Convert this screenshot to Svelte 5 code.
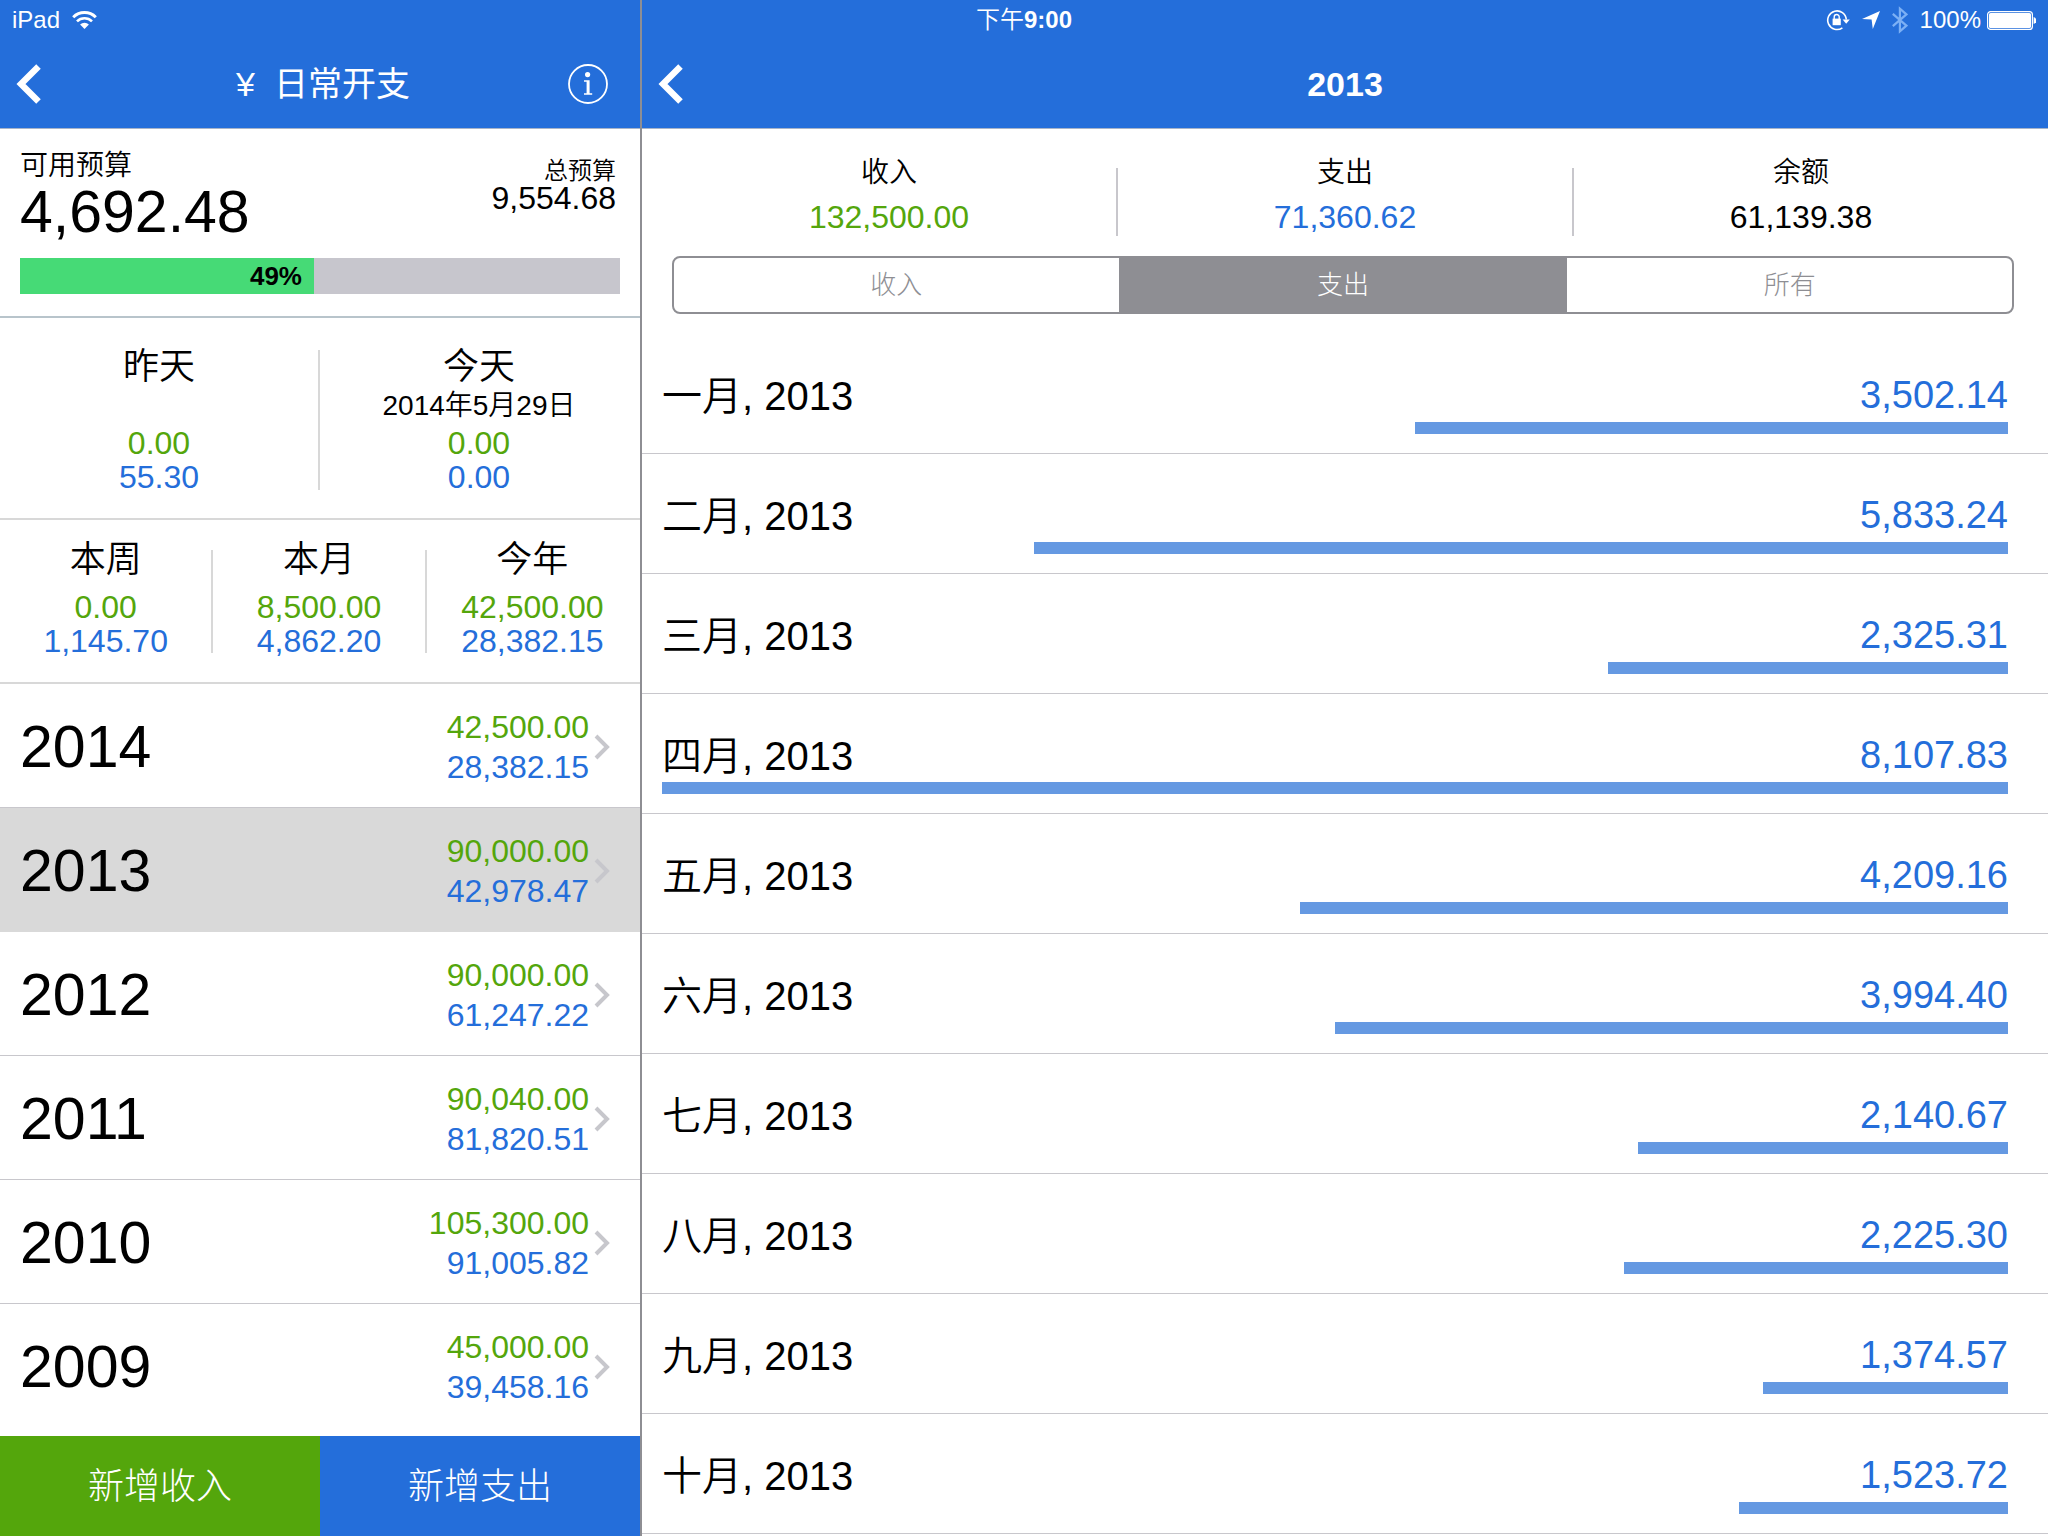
<script>
  const budget = { left: '4,692.48', total: '9,554.68', percent: 49 }

  const days = [
    { title: '昨天', date: '', income: '0.00', expense: '55.30' },
    { title: '今天', date: '2014年5月29日', income: '0.00', expense: '0.00' }
  ]

  const periods = [
    { title: '本周', income: '0.00', expense: '1,145.70' },
    { title: '本月', income: '8,500.00', expense: '4,862.20' },
    { title: '今年', income: '42,500.00', expense: '28,382.15' }
  ]

  const years = [
    { year: 2014, income: '42,500.00', expense: '28,382.15' },
    { year: 2013, income: '90,000.00', expense: '42,978.47' },
    { year: 2012, income: '90,000.00', expense: '61,247.22' },
    { year: 2011, income: '90,040.00', expense: '81,820.51' },
    { year: 2010, income: '105,300.00', expense: '91,005.82' },
    { year: 2009, income: '45,000.00', expense: '39,458.16' }
  ]

  const totals = [
    { title: '收入', value: '132,500.00', kind: 'income' },
    { title: '支出', value: '71,360.62', kind: 'expense' },
    { title: '余额', value: '61,139.38', kind: '' }
  ]

  const filters = ['收入', '支出', '所有']

  const months = [
    { name: '一月', amount: 3502.14 },
    { name: '二月', amount: 5833.24 },
    { name: '三月', amount: 2325.31 },
    { name: '四月', amount: 8107.83 },
    { name: '五月', amount: 4209.16 },
    { name: '六月', amount: 3994.4 },
    { name: '七月', amount: 2140.67 },
    { name: '八月', amount: 2225.3 },
    { name: '九月', amount: 1374.57 },
    { name: '十月', amount: 1523.72 }
  ]

  let selectedYear = $state(2013)
  let selectedFilter = $state('支出')

  const max = Math.max(...months.map(m => m.amount))

  function format(amount) {
    return amount.toLocaleString('en-US', { minimumFractionDigits: 2 })
  }

  // even the smallest amount keeps a 20px stub
  function barWidth(amount) {
    return `calc(20px + (100% - 20px) * ${amount / max})`
  }
</script>

{#snippet backIcon()}
  <svg width="28" height="44" viewBox="0 0 28 44" aria-hidden="true">
    <path d="M24.5 4.5L7 22l17.5 17.5" fill="none" stroke="#fff" stroke-width="6.4" />
  </svg>
{/snippet}

<div class="app">
  <div class="status">
    <div class="status-left">
      <span>iPad</span>
      <svg width="25" height="18" viewBox="0 0 25 18" aria-hidden="true">
        <path d="M1.2 6.2a16 16 0 0 1 22.6 0" fill="none" stroke="#fff" stroke-width="3" />
        <path d="M5 10.4a10.6 10.6 0 0 1 15 0" fill="none" stroke="#fff" stroke-width="2.6" />
        <path d="M12.5 18l-4.4-4.4a6.2 6.2 0 0 1 8.8 0z" fill="#fff" />
      </svg>
    </div>
    <div class="time">下午<b>9:00</b></div>
    <div class="status-right">
      <svg width="24" height="22" viewBox="0 0 24 22" aria-hidden="true">
        <path d="M16.4 18.8a9.3 9.3 0 1 1 3.9-8.3" fill="none" stroke="#fff" stroke-width="1.6" />
        <path d="M16.6 10.4h7.2l-3.6 4.4z" fill="#fff" />
        <path d="M6.6 9.6h8.2v6.6H6.6z" fill="#fff" />
        <path d="M8.2 10V8a2.5 2.5 0 0 1 5 0v2" fill="none" stroke="#fff" stroke-width="1.4" />
      </svg>
      <svg width="18" height="18" viewBox="0 0 18 18" aria-hidden="true">
        <path d="M18 0L10.8 18 9.6 8.6 0 8z" fill="#fff" />
      </svg>
      <svg width="16" height="28" viewBox="0 0 16 28" aria-hidden="true">
        <path d="M.8 7.8L14.4 19.6 7.9 25.4V2.6l6.5 5.8L.8 20.2" fill="none" stroke="#7cb0f5" stroke-width="2.2" />
      </svg>
      <span>100%</span>
      <svg class="battery" width="49" height="19" viewBox="0 0 49 19" aria-hidden="true">
        <rect x=".6" y=".6" width="44.8" height="17.8" rx="3" fill="none" stroke="#fff" stroke-width="1.2" />
        <rect x="2" y="2" width="42" height="15" rx="1.6" fill="#fff" />
        <path d="M46.6 6a3.6 3.6 0 0 1 0 7z" fill="#fff" />
      </svg>
    </div>
  </div>

  <aside class="sidebar">
    <header class="bar">
      <button class="back" aria-label="返回">{@render backIcon()}</button>
      <h1 class="account">¥&nbsp; 日常开支</h1>
      <button class="info" aria-label="信息">
        <svg width="42" height="42" viewBox="0 0 42 42" aria-hidden="true">
          <circle cx="21" cy="21" r="19" fill="none" stroke="#fff" stroke-width="1.8" />
          <circle cx="20.6" cy="11.6" r="2.6" fill="#fff" />
          <path d="M17 17.2h5.6v13h2.6v1.6h-8.2v-1.6h2.6V18.8H17z" fill="#fff" />
        </svg>
      </button>
    </header>

    <section class="budget">
      <div class="budget-row">
        <div>
          <div class="label">可用预算</div>
          <div class="left-amount">{budget.left}</div>
        </div>
        <div class="total">
          <div class="label small">总预算</div>
          <div class="total-amount">{budget.total}</div>
        </div>
      </div>
      <div class="progress">
        <div class="progress-fill" style="width: {budget.percent}%">{budget.percent}%</div>
      </div>
    </section>

    <section class="days">
      {#each days as day}
        <div class="cell">
          <h2>{day.title}</h2>
          <div class="date">{day.date}</div>
          <div class="income">{day.income}</div>
          <div class="expense">{day.expense}</div>
        </div>
      {/each}
    </section>

    <section class="periods">
      {#each periods as period}
        <div class="cell">
          <h2>{period.title}</h2>
          <div class="income">{period.income}</div>
          <div class="expense">{period.expense}</div>
        </div>
      {/each}
    </section>

    <ul class="years">
      {#each years as item}
        <li>
          <button class="year-row" class:selected={item.year === selectedYear} onclick={() => (selectedYear = item.year)}>
            <span class="year">{item.year}</span>
            <span class="amounts">
              <span class="income">{item.income}</span>
              <span class="expense">{item.expense}</span>
            </span>
            <svg width="16" height="26" viewBox="0 0 16 26" aria-hidden="true">
              <path d="M2 2l11 11L2 24" fill="none" stroke="#c7c7cc" stroke-width="4" />
            </svg>
          </button>
        </li>
      {/each}
    </ul>

    <footer>
      <button class="add-income">新增收入</button>
      <button class="add-expense">新增支出</button>
    </footer>
  </aside>

  <main>
    <header class="bar">
      <button class="back" aria-label="返回">{@render backIcon()}</button>
      <h1>{selectedYear}</h1>
      <span></span>
    </header>

    <section class="totals">
      {#each totals as total}
        <div class="total-cell">
          <div class="total-title">{total.title}</div>
          <div class="total-value {total.kind}">{total.value}</div>
        </div>
      {/each}
    </section>

    <div class="segmented">
      {#each filters as filter}
        <button class:active={filter === selectedFilter} onclick={() => (selectedFilter = filter)}>{filter}</button>
      {/each}
    </div>

    <ul class="months">
      {#each months as month}
        <li>
          <div class="month-line">
            <span>{month.name}, 2013</span>
            <span class="month-amount">{format(month.amount)}</span>
          </div>
          <div class="month-bar" style="width: {barWidth(month.amount)}"></div>
        </li>
      {/each}
    </ul>
  </main>
</div>

<style>
  :global(body) {
    margin: 0;
    background: #fff;
  }

  .app {
    position: relative;
    display: grid;
    grid-template-columns: 640px 1fr;
    column-gap: 2px;
    min-height: 100vh;
    background: #8e8e93;
    color: #000;
    font-family: "Liberation Sans", "Noto Sans CJK SC", sans-serif;
    font-size: 32px;
    font-weight: 350;
  }

  button {
    margin: 0;
    padding: 0;
    border: 0;
    background: none;
    color: inherit;
    font: inherit;
    cursor: pointer;
  }

  h1,
  h2,
  ul {
    margin: 0;
    padding: 0;
    list-style: none;
  }

  svg {
    display: block;
    flex: none;
  }

  .income {
    color: #54a60c;
  }

  .expense {
    color: #246eda;
  }

  .status {
    position: absolute;
    top: 0;
    left: 0;
    right: 0;
    display: grid;
    grid-template-columns: 1fr auto 1fr;
    align-items: center;
    height: 40px;
    padding: 0 12px;
    color: #fff;
    font-size: 24px;
    line-height: 40px;
  }

  .status-left,
  .status-right {
    display: flex;
    align-items: center;
    gap: 12px;
  }

  .status-right {
    justify-content: flex-end;
  }

  .battery {
    margin-left: -6px;
  }

  .sidebar,
  main {
    display: flex;
    flex-direction: column;
    min-width: 0;
    background: #fff;
  }

  .bar {
    display: grid;
    grid-template-columns: 84px 1fr 84px;
    align-items: center;
    height: 88px;
    padding-top: 40px;
    border-bottom: 1px solid #a7b4c9;
    background: #246eda;
    color: #fff;
    text-align: center;
  }

  h1 {
    font-size: 34px;
    font-weight: 700;
    line-height: 40px;
  }

  .account {
    padding-left: 6px;
    font-weight: 400;
  }

  .back {
    justify-self: start;
    padding-left: 14px;
  }

  .info {
    justify-self: end;
    padding-right: 31px;
  }

  .budget {
    padding: 20px 20px 22px;
    border-bottom: 2px solid #b8c4cb;
  }

  .budget-row {
    display: flex;
    justify-content: space-between;
  }

  .label {
    font-size: 28px;
    line-height: 34px;
  }

  .small {
    font-size: 24px;
    line-height: 32px;
  }

  .left-amount {
    font-size: 59px;
    line-height: 58px;
  }

  .total {
    padding: 6px 4px 0 0;
    text-align: right;
  }

  .total-amount {
    line-height: 22px;
  }

  .progress {
    height: 36px;
    margin-top: 17px;
    background: #c7c6cd;
  }

  .progress-fill {
    box-sizing: border-box;
    padding-right: 12px;
    background: #46da76;
    font-size: 26px;
    font-weight: 700;
    line-height: 36px;
    text-align: right;
  }

  .days,
  .periods {
    display: flex;
    border-bottom: 2px solid #d8d8d8;
    text-align: center;
  }

  .days {
    padding: 32px 2px 28px 0;
  }

  .periods {
    padding: 30px 2px 29px 0;
  }

  .cell {
    flex: 1;
    height: 140px;
    line-height: 34px;
  }

  .periods .cell {
    height: 103px;
  }

  .cell + .cell {
    border-left: 2px solid #d8d8d8;
  }

  h2 {
    font-size: 36px;
    font-weight: 350;
    line-height: 34px;
  }

  .date {
    height: 42px;
    font-size: 28px;
    line-height: 44px;
  }

  .periods h2 {
    padding-bottom: 20px;
    line-height: 20px;
  }

  .years {
    flex: 1;
  }

  .year-row {
    display: flex;
    align-items: center;
    width: 100%;
    height: 124px;
    padding: 2px 30px 0 20px;
    border-bottom: 1px solid #c8c7cc;
    text-align: left;
  }

  .year-row.selected {
    border-color: #d9d9d9;
    background: #d9d9d9;
  }

  li:last-child .year-row {
    border-color: transparent;
  }

  .year {
    flex: 1;
    font-size: 59px;
  }

  .amounts {
    display: flex;
    flex-direction: column;
    margin-right: 5px;
    line-height: 40px;
    text-align: right;
  }

  footer {
    display: flex;
    height: 100px;
    color: #fff;
    font-size: 36px;
    font-weight: 300;
  }

  footer button {
    flex: 1;
    padding-bottom: 6px;
  }

  .add-income {
    background: #54a60c;
  }

  .add-expense {
    background: #246eda;
  }

  .totals {
    display: flex;
    padding: 39px 20px 20px;
    text-align: center;
  }

  .total-cell {
    flex: 1;
    height: 68px;
  }

  .total-cell + .total-cell {
    border-left: 2px solid #c8c7cc;
  }

  .total-title {
    margin-top: -10px;
    font-size: 28px;
    line-height: 30px;
  }

  .total-value {
    margin-top: 10px;
    line-height: 38px;
  }

  .segmented {
    display: flex;
    height: 54px;
    margin: 0 34px 20px 30px;
    border: 2px solid #8e8e93;
    border-radius: 8px;
    color: #8e8e93;
    font-size: 26px;
    font-weight: 300;
  }

  .segmented button {
    flex: 1;
    padding-bottom: 6px;
  }

  .segmented .active {
    border: solid #8e8e93;
    border-width: 0 2px;
    background: #8e8e93;
    color: #fff;
  }

  .months li {
    padding: 38px 40px 19px 20px;
    border-bottom: 1px solid #c8c7cc;
  }

  .month-line {
    display: flex;
    justify-content: space-between;
    font-size: 40px;
    line-height: 48px;
  }

  .month-amount {
    color: #246eda;
    font-size: 38px;
    line-height: 46px;
  }

  .month-bar {
    height: 12px;
    margin: 2px 0 0 auto;
    background: #6599e2;
  }
</style>
